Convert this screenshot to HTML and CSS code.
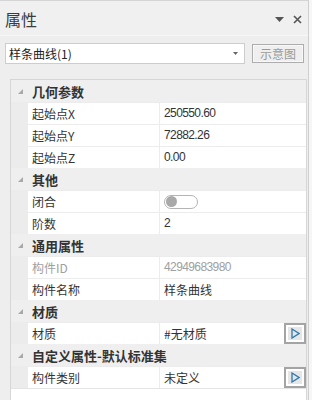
FILE: index.html
```html
<!DOCTYPE html>
<html>
<head>
<meta charset="utf-8">
<link rel="stylesheet" href="styles.css">
</head>
<body>
<div class="panel">
  <div class="header">
    <span class="title">属性</span>
    <span class="hdr-icons">
      <svg class="ico-drop" width="9" height="5" viewBox="0 0 9 5"><polygon points="0,0 9,0 4.5,5" fill="#555"/></svg>
      <svg class="ico-close" width="9" height="9" viewBox="0 0 9 9"><path d="M1 1 L8 8 M8 1 L1 8" stroke="#555" stroke-width="1.6"/></svg>
    </span>
  </div>
  <div class="toolbar">
    <div class="combo">
      <span class="combo-text">样条曲线(1)</span>
      <svg class="combo-arrow" width="5" height="3" viewBox="0 0 5 3"><polygon points="0,0 5,0 2.5,3" fill="#666"/></svg>
    </div>
    <button class="btn" disabled>示意图</button>
  </div>
  <div class="grid">
    <div class="cat"><span class="tri"></span><span class="cat-text">几何参数</span></div>
    <div class="row"><div class="name">起始点X</div><div class="val"><span class="num">250550.60</span></div></div>
    <div class="row"><div class="name">起始点Y</div><div class="val"><span class="num">72882.26</span></div></div>
    <div class="row"><div class="name">起始点Z</div><div class="val"><span class="num">0.00</span></div></div>
    <div class="cat"><span class="tri"></span><span class="cat-text">其他</span></div>
    <div class="row"><div class="name">闭合</div><div class="val"><span class="toggle"><span class="knob"></span></span></div></div>
    <div class="row"><div class="name">阶数</div><div class="val"><span class="num">2</span></div></div>
    <div class="cat"><span class="tri"></span><span class="cat-text">通用属性</span></div>
    <div class="row disabled"><div class="name">构件ID</div><div class="val"><span class="num">42949683980</span></div></div>
    <div class="row"><div class="name">构件名称</div><div class="val">样条曲线</div></div>
    <div class="cat"><span class="tri"></span><span class="cat-text">材质</span></div>
    <div class="row"><div class="name">材质</div><div class="val has-btn"><span>#无材质</span><span class="pick"><span class="pick-in"><svg width="9" height="11" viewBox="0 0 9 11"><polygon points="1,1 8,5.5 1,10" fill="none" stroke="#2f78b0" stroke-width="1.3"/></svg></span></span></div></div>
    <div class="cat"><span class="tri"></span><span class="cat-text">自定义属性-默认标准集</span></div>
    <div class="row"><div class="name">构件类别</div><div class="val has-btn"><span>未定义</span><span class="pick"><span class="pick-in"><svg width="9" height="11" viewBox="0 0 9 11"><polygon points="1,1 8,5.5 1,10" fill="none" stroke="#2f78b0" stroke-width="1.3"/></svg></span></span></div></div>
    <div class="filler"></div>
  </div>
</div>
</body>
</html>
```

FILE: styles.css
```css
html, body {
  margin: 0;
  padding: 0;
  background: #f6f6f6;
  overflow: hidden;
  height: 400px;
}
body {
  font-family: "Noto Sans CJK SC", "Noto Sans", sans-serif;
  color: #333;
}
.panel {
  width: 308px;
  height: 399px;
  border-top: 1px solid #d4d4d4;
  border-right: 1px solid #cfcfcf;
  background: #eeeeee;
  overflow: hidden;
}
.header {
  height: 35px;
  border-bottom: 1px solid #f7f7f7;
  background: #f0f0f0;
  display: flex;
  align-items: center;
  justify-content: space-between;
  padding: 2px 0 0 5px;
  box-sizing: border-box;
}
.title {
  font-size: 16px;
  color: #3c3c3c;
  line-height: 20px;
}
.hdr-icons {
  display: flex;
  align-items: center;
  padding-right: 6px;
}
.ico-drop { margin-right: 9px; }
.toolbar {
  display: flex;
  align-items: center;
  padding: 7px 4px 0 5px;
  height: 21px;
}
.combo {
  width: 240px;
  height: 21px;
  box-sizing: border-box;
  border: 1px solid #cdcdcd;
  background: #fff;
  display: flex;
  align-items: center;
  justify-content: space-between;
  padding: 0 6px 0 3px;
}
.combo-text {
  font-size: 12px;
  color: #222;
  line-height: 16px;
}
.btn {
  margin-left: 7px;
  width: 52px;
  height: 19px;
  box-sizing: border-box;
  border: 1px solid #adadad;
  box-shadow: inset 0 0 0 1px #f8f8f8;
  background: #efefef;
  color: #9a9a9a;
  font-family: "Noto Sans CJK SC", sans-serif;
  font-size: 12px;
  line-height: 15px;
  padding: 0;
}
.grid {
  margin: 15px 1px 0 10px;
  border: 1px solid #d6d6d6;
  background: #fff;
  height: 340px;
  box-sizing: border-box;
}
.cat {
  height: 22px;
  background: #efefef;
  display: flex;
  align-items: center;
  padding-left: 7px;
}
.tri {
  width: 0;
  height: 0;
  border-right: 5px solid #a8a8a8;
  border-top: 5px solid transparent;
  margin-right: 9px;
}
.cat-text {
  font-size: 13px;
  font-weight: bold;
  color: #333;
  white-space: nowrap;
}
.row {
  height: 22px;
  box-sizing: border-box;
  padding: 1px 0 0 17px;
  background: #ececec;
  display: grid;
  grid-template-columns: 131px 146px;
  column-gap: 1px;
}
.name, .val {
  background: #fff;
  font-size: 12px;
  line-height: 21px;
  padding-left: 4px;
  white-space: nowrap;
  color: #333;
}
.disabled .name, .disabled .val { color: #a0a0a0; }
.num {
  font-family: "Liberation Sans", sans-serif;
  letter-spacing: -0.6px;
}
.val { display: flex; align-items: center; }
.has-btn { justify-content: space-between; }
.toggle {
  width: 34px;
  height: 14px;
  box-sizing: border-box;
  border: 1px solid #b4b4b4;
  border-radius: 7px;
  background: #fff;
  display: flex;
  align-items: center;
  padding-left: 1px;
}
.knob {
  width: 11px;
  height: 11px;
  border-radius: 50%;
  background: #a9a9a9;
}
.pick {
  width: 22px;
  height: 21px;
  box-sizing: border-box;
  border: 2px solid #a4a4a4;
  background: #fff;
  display: flex;
  align-items: center;
  justify-content: center;
}
.pick-in {
  width: 14px;
  height: 13px;
  background: #e6e6e6;
  display: flex;
  align-items: center;
  justify-content: center;
}
.filler {
  border-top: 1px solid #e4e4e4;
  background: #fff;
  height: 40px;
}
```
